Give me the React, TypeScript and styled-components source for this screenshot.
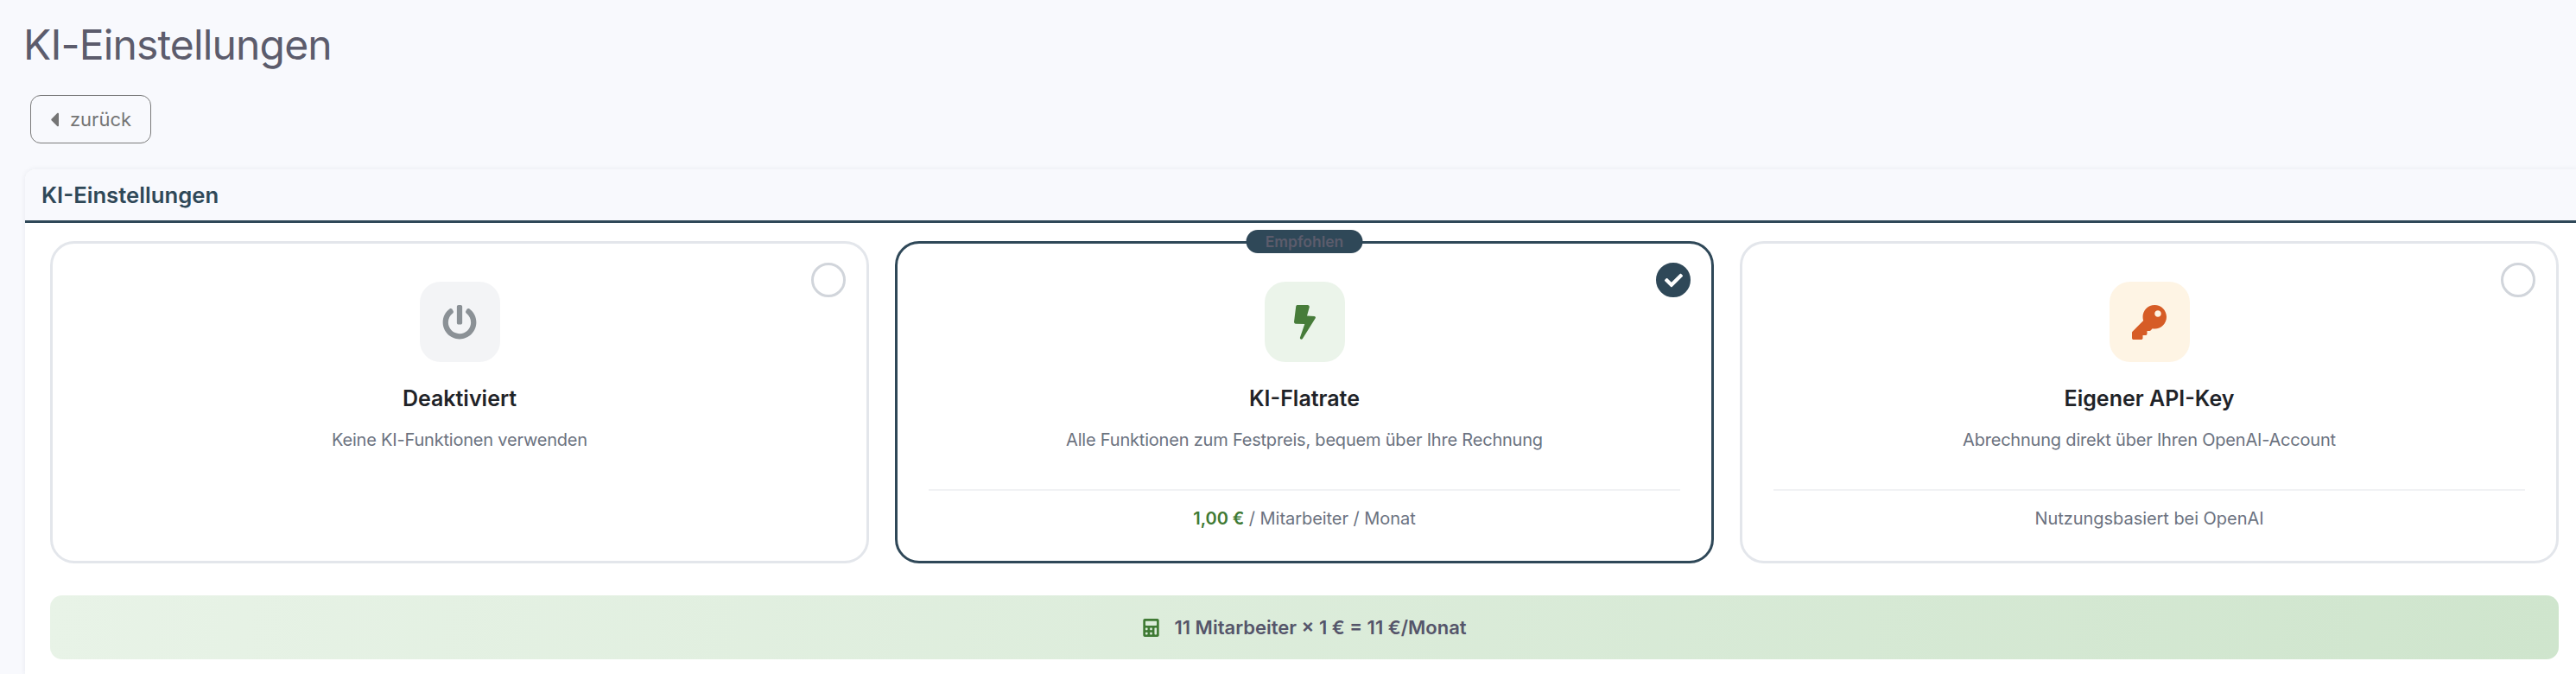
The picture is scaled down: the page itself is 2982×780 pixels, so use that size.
import React from "react";
import styled, { createGlobalStyle } from "styled-components";
import { FaCalculator, FaCaretLeft, FaCheck, FaKey, FaPowerOff } from "react-icons/fa";

const Global = createGlobalStyle`
  html, body { margin: 0; padding: 0; background: #f8f9fd; overflow: hidden; height: 780px; }
  body { font-family: Inter, "Liberation Sans", sans-serif; -webkit-font-smoothing: antialiased; }
`;

const Page = styled.div`
  width: 3020px;
  height: 780px;
  overflow: hidden;
  padding: 23px 0 0 29px;
  box-sizing: border-box;
`;

const Heading = styled.h1`
  margin: 0 0 29px -2px;
  font-size: 48px;
  line-height: 58px;
  font-weight: 400;
  letter-spacing: -0.85px;
  color: #5c5c6c;
`;

const BackButton = styled.button`
  display: flex;
  align-items: center;
  justify-content: center;
  gap: 13px;
  width: 140px;
  height: 56px;
  margin: 0 0 30px 6px;
  padding: 0;
  background: transparent;
  border: 1.5px solid #7b7b7b;
  border-radius: 12px;
  color: #757575;
  font: 400 22px Inter, sans-serif;
  svg { width: 10px; height: 27px; }
`;

const Panel = styled.section`
  width: 2962px;
  background: #fff;
  border-radius: 12px 12px 0 0;
  box-shadow: 0 0 6px rgba(40, 50, 80, 0.08);
`;

const PanelHeader = styled.header`
  height: 59px;
  display: flex;
  align-items: center;
  padding-left: 19px;
  background: #f8f9fd;
  border-bottom: 3px solid #2f4858;
  border-radius: 12px 12px 0 0;
  font-size: 25.7px;
  font-weight: 600;
  color: #2f4858;
`;

const PanelBody = styled.div`
  padding: 21px 29px 17px;
  background: #fff;
`;

const Options = styled.div`
  display: grid;
  grid-template-columns: repeat(3, 1fr);
  gap: 30px;
`;

const OptionCard = styled.div<{ $selected?: boolean }>`
  position: relative;
  display: flex;
  flex-direction: column;
  align-items: center;
  height: 373px;
  box-sizing: border-box;
  padding: 44px 36px 0;
  background: #fff;
  border: 3px solid ${(p) => (p.$selected ? "#2f4858" : "#e3e6eb")};
  border-radius: 28px;
`;

const Badge = styled.span`
  position: absolute;
  top: -16px;
  left: 50%;
  transform: translateX(-50%);
  width: 135px;
  height: 27px;
  display: flex;
  align-items: center;
  justify-content: center;
  background: #2f4858;
  border-radius: 14px;
  color: #5c5c6c;
  font-size: 17.5px;
  font-weight: 600;
`;

const Radio = styled.span<{ $checked?: boolean }>`
  position: absolute;
  top: 22px;
  right: 24px;
  width: 40px;
  height: 40px;
  box-sizing: border-box;
  display: flex;
  align-items: center;
  justify-content: center;
  border-radius: 50%;
  border: 3px solid ${(p) => (p.$checked ? "#2f4858" : "#d1d5db")};
  background: ${(p) => (p.$checked ? "#2f4858" : "#fff")};
  color: #fff;
  svg { width: 21px; height: 21px; }
`;

const IconBox = styled.div<{ $bg: string; $fg: string }>`
  width: 93px;
  height: 93px;
  flex: none;
  display: flex;
  align-items: center;
  justify-content: center;
  border-radius: 24px;
  background: ${(p) => p.$bg};
  color: ${(p) => p.$fg};
  svg { width: auto; height: 40px; }
`;

const OptionTitle = styled.div`
  margin-top: 28px;
  font-size: 25px;
  line-height: 29px;
  font-weight: 600;
  color: #1f2328;
`;

const OptionText = styled.div`
  margin-top: 21px;
  font-size: 20px;
  line-height: 24px;
  letter-spacing: -0.2px;
  color: #6b7280;
`;

const OptionFooter = styled.div`
  margin-top: auto;
  margin-bottom: 37px;
  align-self: stretch;
  padding-top: 20px;
  border-top: 2px solid #f1f2f4;
  text-align: center;
  font-size: 20px;
  line-height: 24px;
  letter-spacing: -0.05px;
  color: #6b7280;
`;

const Price = styled.strong`
  font-weight: 600;
  color: #3f7a34;
`;

const Summary = styled.div`
  margin-top: 37px;
  height: 74px;
  display: flex;
  align-items: center;
  justify-content: center;
  gap: 16px;
  border-radius: 14px;
  background: linear-gradient(100deg, #e8f3e7 0%, #cfe5cd 100%);
  font-size: 22px;
  font-weight: 600;
  color: #55556a;
  svg { width: auto; height: 21px; color: #3f7a34; }
`;

const Bolt = () => (
  <svg viewBox="0 0 25 40" fill="currentColor" aria-hidden="true">
    <path d="M4 0h11.5c1.6 0 2.6 1.3 2.2 2.8L15 12.5l8.5.4c1.2.1 1.8 1.3 1.2 2.3L10 38.8c-1.1 1.7-3.5.8-3.1-1.1L12.3 22 2 21.7C.7 21.7 0 20.6 0 19.5L2.2 1.7C2.4.7 3 0 4 0z" />
  </svg>
);

export default function App() {
  return (
    <Page>
      <Global />
      <Heading>KI-Einstellungen</Heading>
      <BackButton>
        <FaCaretLeft />
        zurück
      </BackButton>
      <Panel>
        <PanelHeader>KI-Einstellungen</PanelHeader>
        <PanelBody>
          <Options>
            <OptionCard>
              <Radio />
              <IconBox $bg="#f3f4f6" $fg="#8b9196">
                <FaPowerOff />
              </IconBox>
              <OptionTitle>Deaktiviert</OptionTitle>
              <OptionText>Keine KI-Funktionen verwenden</OptionText>
            </OptionCard>
            <OptionCard $selected>
              <Badge>Empfohlen</Badge>
              <Radio $checked>
                <FaCheck />
              </Radio>
              <IconBox $bg="#ebf4ea" $fg="#477c3a">
                <Bolt />
              </IconBox>
              <OptionTitle>KI-Flatrate</OptionTitle>
              <OptionText>Alle Funktionen zum Festpreis, bequem über Ihre Rechnung</OptionText>
              <OptionFooter>
                <Price>1,00 €</Price> / Mitarbeiter / Monat
              </OptionFooter>
            </OptionCard>
            <OptionCard>
              <Radio />
              <IconBox $bg="#fef4e4" $fg="#d65c26">
                <FaKey />
              </IconBox>
              <OptionTitle>Eigener API-Key</OptionTitle>
              <OptionText>Abrechnung direkt über Ihren OpenAI-Account</OptionText>
              <OptionFooter>Nutzungsbasiert bei OpenAI</OptionFooter>
            </OptionCard>
          </Options>
          <Summary>
            <FaCalculator />
            11 Mitarbeiter × 1 € = 11 €/Monat
          </Summary>
        </PanelBody>
      </Panel>
    </Page>
  );
}
